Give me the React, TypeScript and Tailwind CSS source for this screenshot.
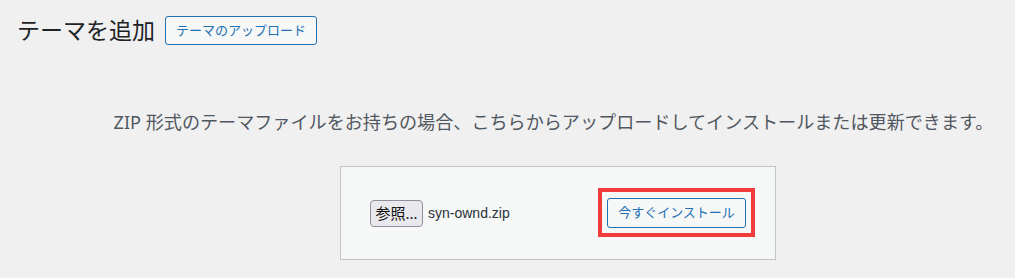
const JP = { fontFamily: '"Noto Sans", "Noto Sans CJK JP", sans-serif' }

function FileField({ fileName }: { fileName: string }) {
  return (
    <div className="flex items-center gap-[5px]">
      <span className="flex h-[27px] w-[53px] items-center justify-center rounded-[4px] border border-[#8f8f9d] bg-[#e9e9ed] text-[15px] leading-none text-[#111]">
        参照...
      </span>
      <span className="text-[14px] text-[#2c3338]" style={{ fontFamily: '"Liberation Sans", "Noto Sans CJK JP", sans-serif' }}>
        {fileName}
      </span>
    </div>
  )
}

export default function App() {
  return (
    <div className="h-[278px] w-[1015px] overflow-hidden bg-[#f0f0f1] text-[#1d2327]" style={JP}>
      <div className="flex items-center gap-[10px] pl-[17px] pt-[16px]">
        <h1 className="text-[23px] leading-[29px] font-normal text-[#1d2327]">テーマを追加</h1>
        <button
          type="button"
          className="h-[29px] w-[152px] rounded-[3px] border border-[#2271b1] bg-[#f6f7f7] text-[13px] text-[#2271b1]"
        >
          テーマのアップロード
        </button>
      </div>

      <div className="w-[1116px]">
        <p className="mt-[64px] pr-[9px] text-center text-[18.1px] leading-[27px] text-[#50575e]">
          ZIP 形式のテーマファイルをお持ちの場合、こちらからアップロードしてインストールまたは更新できます。
        </p>

        <div className="mx-auto mt-[30px] flex h-[94px] w-[436px] items-center justify-between border border-[#c3c4c7] bg-[#f6f7f7] px-[29px]">
          <FileField fileName="syn-ownd.zip" />
          <div className="relative">
            <button
              type="button"
              className="h-[30px] w-[139px] rounded-[3px] border border-[#2271b1] bg-[#f6f7f7] text-[13px] text-[#2271b1]"
            >
              今すぐインストール
            </button>
            <div className="pointer-events-none absolute -inset-x-[9px] -top-[10px] -bottom-[9px] border-4 border-[#f23c3c]" />
          </div>
        </div>
      </div>
    </div>
  )
}
